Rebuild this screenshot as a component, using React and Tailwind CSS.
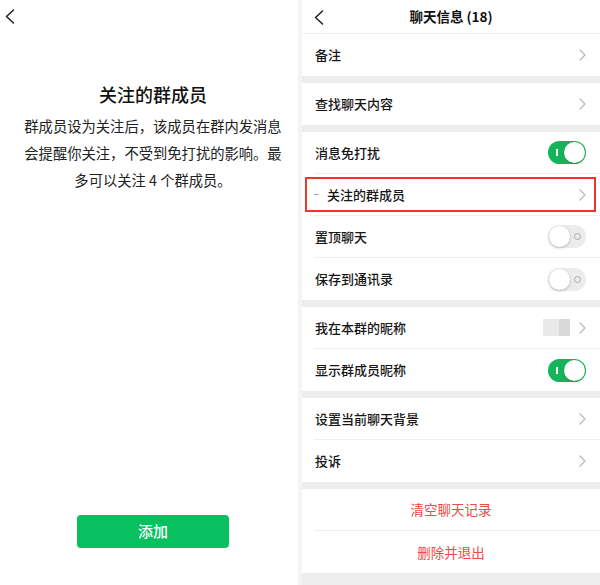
import React from 'react'

const font = { fontFamily: '"Noto Sans CJK SC", "Noto Sans", sans-serif' }

function Back({ className }) {
  return (
    <svg width="10" height="15" viewBox="0 0 10 15" className={className}>
      <polyline points="8.5,1 1.5,7.5 8.5,14" fill="none" stroke="#1f1f1f" strokeWidth="1.5" strokeLinejoin="round" strokeLinecap="round" />
    </svg>
  )
}

function Arrow() {
  return (
    <svg width="7" height="12" viewBox="0 0 7 12">
      <polyline points="1,1 6,6 1,11" fill="none" stroke="#b8b8b8" strokeWidth="1.3" strokeLinejoin="round" strokeLinecap="round" />
    </svg>
  )
}

function Toggle({ on }) {
  if (on) {
    return (
      <div className="relative w-[38px] h-[23px] rounded-full bg-[#13b45a] flex items-center justify-end pr-[1px]">
        <div className="absolute left-[8px] top-[8px] w-[1.5px] h-[7px] bg-white" />
        <div className="w-[21px] h-[21px] rounded-full bg-white shadow-[0_1px_2px_rgba(0,0,0,0.2)]" />
      </div>
    )
  }
  return (
    <div className="relative w-[38px] h-[23px] rounded-full bg-[#ececec] flex items-center pl-[1px]">
      <div className="absolute right-[5px] top-[8px] w-[7px] h-[7px] rounded-full border border-[#a8a8a8]" />
      <div className="w-[21px] h-[21px] rounded-full bg-white shadow-[0_1px_3px_rgba(0,0,0,0.25)]" />
    </div>
  )
}

function Row({ label, right, divider, children }) {
  return (
    <div className="relative h-[42px] bg-white flex flex-col">
      <div className="flex-1 flex items-center justify-between pl-[13px] pr-[14px]">
        <div className="flex items-center text-[13px] font-medium text-[#161616]">{label}</div>
        {right}
      </div>
      {divider && <div className="ml-[12px] h-px bg-[#efefef]" />}
      {children}
    </div>
  )
}

const Gap = () => <div className="h-[7px] bg-[#ededed]" />

export default function App() {
  return (
    <div className="w-[600px] h-[585px] flex bg-[#f4f4f4] overflow-hidden" style={font}>
      {/* left: 关注的群成员 page */}
      <div className="w-[298px] bg-white flex flex-col">
        <div className="h-[33px] flex items-center pl-[5px]">
          <Back />
        </div>
        <div className="pl-[8px] flex-1 flex flex-col items-center">
          <h2 className="mt-[49px] text-[18px] leading-[24px] font-medium text-[#111]">关注的群成员</h2>
          <p className="mt-[6px] text-[14.3px] leading-[27px] text-[#222] text-center whitespace-nowrap">
            群成员设为关注后，该成员在群内发消息<br />
            会提醒你关注，不受到免打扰的影响。最<br />
            多可以关注 4 个群成员。
          </p>
          <div className="flex-1" />
          <button className="mb-[37px] w-[152px] h-[33px] rounded-[4px] bg-[#07c160] text-white text-[15px] font-medium">添加</button>
        </div>
      </div>

      <div className="w-[4px]" />

      {/* right: 聊天信息 */}
      <div className="w-[298px] bg-[#ededed] flex flex-col">
        <div className="relative h-[34px] bg-white border-b border-[#f0f0f0] flex items-center justify-center">
          <Back className="absolute left-[12px] top-[10px]" />
          <span className="text-[13.5px] font-semibold text-[#111]">聊天信息 (18)</span>
        </div>
        <Row label="备注" right={<Arrow />} />
        <Gap />
        <Row label="查找聊天内容" right={<Arrow />} />
        <Gap />
        <Row label="消息免打扰" right={<Toggle on />} divider />
        <Row label={<><span className="w-[5px] h-px bg-[#aaa] mr-[8px] ml-[-1px]" />关注的群成员</>} right={<Arrow />} divider>
          {/* highlight box */}
          <div className="absolute left-[3px] right-[4px] top-[3px] bottom-[4px] shadow-[inset_0_0_0_2px_#f2332b]" />
        </Row>
        <Row label="置顶聊天" right={<Toggle />} divider />
        <Row label="保存到通讯录" right={<Toggle />} />
        <Gap />
        <Row
          label="我在本群的昵称"
          divider
          right={
            <div className="flex items-center gap-[9px]">
              <div className="flex w-[27px] h-[17px]">
                <div className="w-[16px] bg-[#e9e9e9]" />
                <div className="w-[11px] bg-[#d9d9d9]" />
              </div>
              <Arrow />
            </div>
          }
        />
        <Row label="显示群成员昵称" right={<Toggle on />} />
        <Gap />
        <Row label="设置当前聊天背景" right={<Arrow />} divider />
        <Row label="投诉" right={<Arrow />} />
        <Gap />
        <div className="h-[42px] bg-white flex flex-col">
          <div className="flex-1 flex items-center justify-center text-[13.5px] text-[#ec4a45]">清空聊天记录</div>
          <div className="ml-[12px] h-px bg-[#efefef]" />
        </div>
        <div className="h-[42px] bg-white flex items-center justify-center text-[13.5px] text-[#ec4a45]">删除并退出</div>
      </div>
    </div>
  )
}
